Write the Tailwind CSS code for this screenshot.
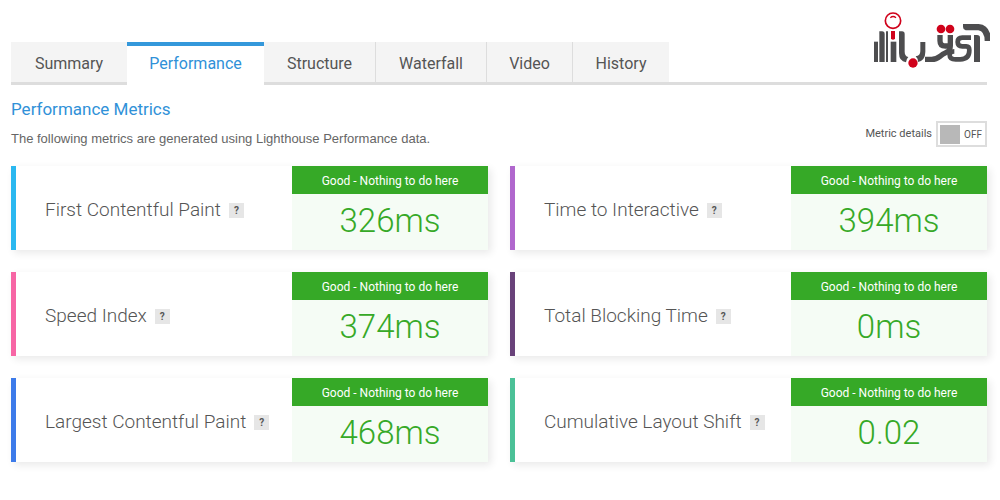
<!DOCTYPE html>
<html lang="en">
<head>
<meta charset="utf-8">
<title>Performance Metrics</title>
<script src="https://cdn.jsdelivr.net/npm/@tailwindcss/browser@4"></script>
</head>
<body class="bg-white font-['Roboto',sans-serif] text-[#555]">
<div class="relative pl-[11px] pr-[13px] pt-[42px]">
  <!-- Brand mark -->
  <svg class="absolute right-0 top-0 h-20 w-[140px]" viewBox="0 0 420 240" fill="none" role="img" aria-label="Logo">
    <g fill="#4d4d4f">
      <path d="M42 125h12v61H42z"/>
      <path d="M58 94h8q8 0 8 8v84H58z"/>
      <path d="M78 94h6v92h-6z"/>
      <path d="M92 125h17v61H92z"/>
      <path d="M117 94h9q8 0 8 8v53q0 13 11 16q-7 7-7 16q-21-3-21-28z"/>
      <path d="M181 126h15v29q0 26-22 31q0-11-7-17q14-2 14-16z"/>
      <path d="M309 72h47q26 2 34 28v23h-16q0-29-19-32h-38q-8-2-8-10z"/>
      <path d="M342 105h9q9 0 9 8v73h-18z"/>
    </g>
    <g stroke="#4d4d4f" stroke-width="16">
      <path d="M240 105v17q0 16 16 16h8"/>
      <path d="M271 105v32q0 17-14 21q-9 3-17 11q-11 9-25 9h-20"/>
      <path d="M333 113h-26q-14 0-14 13t14 13h12q9 0 9 12q0 27-27 27h-14q-18 0-18-13q0-11 14-11" stroke-width="14"/>
    </g>
    <g fill="#d0021b">
      <circle cx="159" cy="189" r="14"/>
      <circle cx="243" cy="87" r="13"/>
      <circle cx="270" cy="87" r="13"/>
      <path d="M93 93h12v22q0 4-6 4t-6-4z"/>
    </g>
    <circle cx="99" cy="62" r="23" fill="#fff" stroke="#d0021b" stroke-width="5"/>
    <path d="M91 53q8-7 17 0" stroke="#d0021b" stroke-width="4"/>
  </svg>

  <nav class="flex h-[43px] text-base" aria-label="Report sections">
    <a href="#" class="flex w-[116px] items-center justify-center border-b-3 border-[#ddd] bg-[#f4f4f4] pt-[3px]">Summary</a>
    <a href="#" aria-current="page" class="flex w-[137px] items-center justify-center border-t-4 border-[#3498db] bg-white pb-1 text-[#3091d8]">Performance</a>
    <a href="#" class="flex w-[111px] items-center justify-center border-b-3 border-[#ddd] bg-[#f4f4f4] pt-[3px]">Structure</a>
    <a href="#" class="flex w-[111px] items-center justify-center border-b-3 border-l border-[#ddd] bg-[#f4f4f4] pt-[3px]">Waterfall</a>
    <a href="#" class="flex w-[86px] items-center justify-center border-b-3 border-l border-[#ddd] bg-[#f4f4f4] pt-[3px]">Video</a>
    <a href="#" class="flex w-[97px] items-center justify-center border-b-3 border-l border-[#ddd] bg-[#f4f4f4] pt-[3px]">History</a>
    <span class="flex-1 border-b-3 border-[#ddd]"></span>
  </nav>

  <main>
    <div class="flex items-end justify-between pt-3">
      <div>
        <h1 class="text-[17px] leading-6 text-[#3091d8]">Performance Metrics</h1>
        <p class="mt-2 font-['Liberation_Sans',sans-serif] text-[13px] leading-5 text-[#666]">The following metrics are generated using Lighthouse Performance data.</p>
      </div>
      <div class="flex items-center gap-1 pb-[2px] text-[11px]">
        <label for="details">Metric details</label>
        <button id="details" type="button" role="switch" aria-checked="false" class="flex h-[26px] w-[51px] items-center gap-1 border-2 border-[#ddd] bg-white pl-[2px] text-[10px]"><span class="h-[19px] w-[20px] bg-[#b8b8b8]"></span>OFF</button>
      </div>
    </div>

    <div class="mt-[17px] grid grid-cols-2 gap-[22px] pb-9">
      <section class="flex h-[84px] border-l-5 border-[#2bb8f0] bg-white shadow-[3px_3px_8px_rgba(0,0,0,0.09)]">
        <div class="flex flex-1 items-center gap-2 pl-[29px] pt-1"><h2 class="text-[19px] font-light whitespace-nowrap">First Contentful Paint</h2><button type="button" aria-label="About First Contentful Paint" class="size-[15px] bg-[#e6e6e6] text-[10px] leading-[15px] font-bold">?</button></div>
        <div class="flex w-[196px] flex-col bg-[#f5fcf5] text-center"><p class="h-[28px] bg-[#36a927] pt-px text-xs leading-7 text-white">Good - Nothing to do here</p><p class="text-[33px] leading-[54px] font-light text-[#36a927]">326ms</p></div>
      </section>
      <section class="flex h-[84px] border-l-5 border-[#b067cd] bg-white shadow-[3px_3px_8px_rgba(0,0,0,0.09)]">
        <div class="flex flex-1 items-center gap-2 pl-[29px] pt-1"><h2 class="text-[19px] font-light whitespace-nowrap">Time to Interactive</h2><button type="button" aria-label="About Time to Interactive" class="size-[15px] bg-[#e6e6e6] text-[10px] leading-[15px] font-bold">?</button></div>
        <div class="flex w-[196px] flex-col bg-[#f5fcf5] text-center"><p class="h-[28px] bg-[#36a927] pt-px text-xs leading-7 text-white">Good - Nothing to do here</p><p class="text-[33px] leading-[54px] font-light text-[#36a927]">394ms</p></div>
      </section>
      <section class="flex h-[84px] border-l-5 border-[#f766a5] bg-white shadow-[3px_3px_8px_rgba(0,0,0,0.09)]">
        <div class="flex flex-1 items-center gap-2 pl-[29px] pt-1"><h2 class="text-[19px] font-light whitespace-nowrap">Speed Index</h2><button type="button" aria-label="About Speed Index" class="size-[15px] bg-[#e6e6e6] text-[10px] leading-[15px] font-bold">?</button></div>
        <div class="flex w-[196px] flex-col bg-[#f5fcf5] text-center"><p class="h-[28px] bg-[#36a927] pt-px text-xs leading-7 text-white">Good - Nothing to do here</p><p class="text-[33px] leading-[54px] font-light text-[#36a927]">374ms</p></div>
      </section>
      <section class="flex h-[84px] border-l-5 border-[#69427a] bg-white shadow-[3px_3px_8px_rgba(0,0,0,0.09)]">
        <div class="flex flex-1 items-center gap-2 pl-[29px] pt-1"><h2 class="text-[19px] font-light whitespace-nowrap">Total Blocking Time</h2><button type="button" aria-label="About Total Blocking Time" class="size-[15px] bg-[#e6e6e6] text-[10px] leading-[15px] font-bold">?</button></div>
        <div class="flex w-[196px] flex-col bg-[#f5fcf5] text-center"><p class="h-[28px] bg-[#36a927] pt-px text-xs leading-7 text-white">Good - Nothing to do here</p><p class="text-[33px] leading-[54px] font-light text-[#36a927]">0ms</p></div>
      </section>
      <section class="flex h-[84px] border-l-5 border-[#3d7bea] bg-white shadow-[3px_3px_8px_rgba(0,0,0,0.09)]">
        <div class="flex flex-1 items-center gap-2 pl-[29px] pt-1"><h2 class="text-[19px] font-light whitespace-nowrap">Largest Contentful Paint</h2><button type="button" aria-label="About Largest Contentful Paint" class="size-[15px] bg-[#e6e6e6] text-[10px] leading-[15px] font-bold">?</button></div>
        <div class="flex w-[196px] flex-col bg-[#f5fcf5] text-center"><p class="h-[28px] bg-[#36a927] pt-px text-xs leading-7 text-white">Good - Nothing to do here</p><p class="text-[33px] leading-[54px] font-light text-[#36a927]">468ms</p></div>
      </section>
      <section class="flex h-[84px] border-l-5 border-[#4bc197] bg-white shadow-[3px_3px_8px_rgba(0,0,0,0.09)]">
        <div class="flex flex-1 items-center gap-2 pl-[29px] pt-1"><h2 class="text-[19px] font-light whitespace-nowrap">Cumulative Layout Shift</h2><button type="button" aria-label="About Cumulative Layout Shift" class="size-[15px] bg-[#e6e6e6] text-[10px] leading-[15px] font-bold">?</button></div>
        <div class="flex w-[196px] flex-col bg-[#f5fcf5] text-center"><p class="h-[28px] bg-[#36a927] pt-px text-xs leading-7 text-white">Good - Nothing to do here</p><p class="text-[33px] leading-[54px] font-light text-[#36a927]">0.02</p></div>
      </section>
    </div>
  </main>
</div>
</body>
</html>
